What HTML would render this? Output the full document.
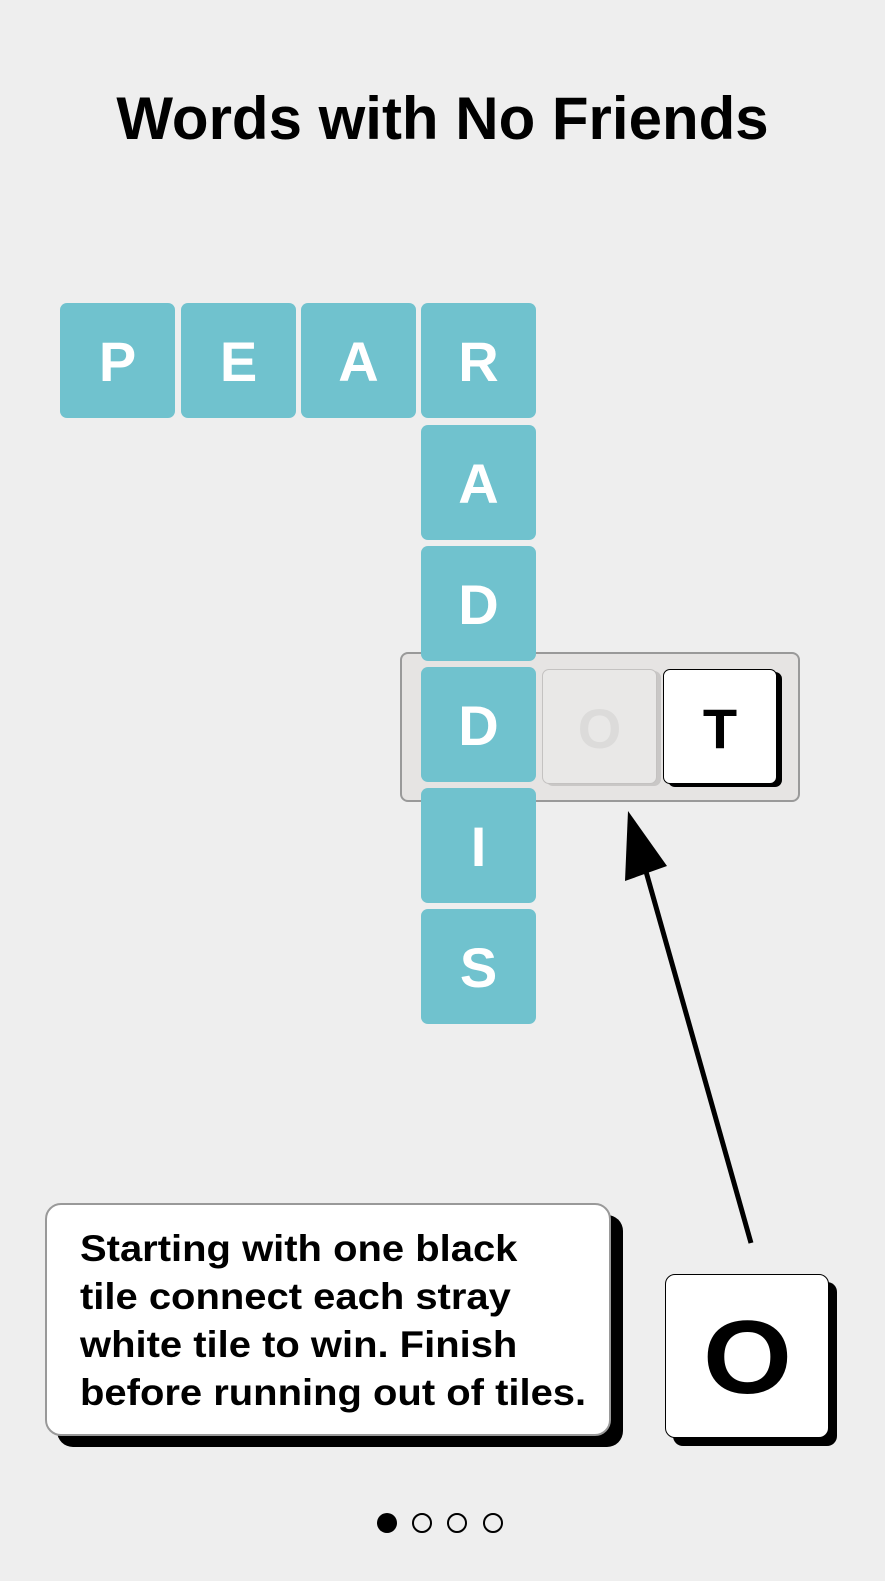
<!DOCTYPE html>
<html><head><style>
body{margin:0;width:885px;height:1581px;background:#eeeeee;font-family:"Liberation Sans",sans-serif;position:relative;overflow:hidden}
.a{position:absolute}
h1{position:absolute;top:84px;left:0;width:885px;text-align:center;margin:0;font-size:60px;font-weight:bold;color:#000}
.t{position:absolute;width:115px;height:115px;border-radius:7px;background:#70c2ce;color:#fff;font-weight:bold;font-size:56px;text-align:center;line-height:117px}
</style></head><body>
<h1>Words with No Friends</h1>
<div class="a" style="left:400px;top:652px;width:396px;height:146px;background:#e6e4e3;border:2px solid #999;border-radius:8px"></div>
<div class="t" style="left:60px;top:303px">P</div>
<div class="t" style="left:181px;top:303px">E</div>
<div class="t" style="left:301px;top:303px">A</div>
<div class="t" style="left:421px;top:303px">R</div>
<div class="t" style="left:421px;top:425px">A</div>
<div class="t" style="left:421px;top:546px">D</div>
<div class="t" style="left:421px;top:667px">D</div>
<div class="t" style="left:421px;top:788px">I</div>
<div class="t" style="left:421px;top:909px">S</div>
<div class="a" style="left:542px;top:669px;width:113px;height:113px;border:1px solid #c4c2c1;border-radius:7px;background:#e9e8e7;box-shadow:4px 2px 0 #c9c7c6;color:#dcdbda;font-weight:bold;font-size:56px;text-align:center;line-height:117px">O</div>
<div class="a" style="left:663px;top:669px;width:112px;height:113px;border:1px solid #000;border-radius:7px;background:#fff;box-shadow:5px 3px 0 #000;color:#000;font-weight:bold;font-size:56px;text-align:center;line-height:117px">T</div>
<svg class="a" style="left:0;top:0" width="885" height="1581">
<line x1="751" y1="1243" x2="645" y2="868" stroke="#000" stroke-width="5"/>
<polygon points="628,811 625,881 667,866" fill="#000"/>
</svg>
<div class="a" style="left:57px;top:1215px;width:566px;height:232px;border-radius:16px;background:#000"></div>
<div class="a" style="left:45px;top:1203px;width:562px;height:229px;border:2px solid #999;border-radius:16px;background:#fff"></div>
<div class="a" style="left:80px;top:1225px;font-size:37px;font-weight:bold;line-height:48px;color:#000;transform:scaleX(1.08);transform-origin:0 0;white-space:nowrap">Starting with one black<br>tile connect each stray<br>white tile to win. Finish<br>before running out of tiles.</div>
<div class="a" style="left:665px;top:1274px;width:162px;height:162px;border:1px solid #000;border-radius:10px;background:#fff;box-shadow:8px 8px 0 #000;font-weight:bold;font-size:104px;text-align:center;line-height:166px"><span style="display:inline-block;transform:scaleX(1.1)">O</span></div>
<div class="a" style="left:377px;top:1513px;width:20px;height:20px;border-radius:50%;background:#000"></div>
<div class="a" style="left:412px;top:1513px;width:16px;height:16px;border-radius:50%;border:2px solid #000"></div>
<div class="a" style="left:447px;top:1513px;width:16px;height:16px;border-radius:50%;border:2px solid #000"></div>
<div class="a" style="left:483px;top:1513px;width:16px;height:16px;border-radius:50%;border:2px solid #000"></div>
</body></html>
